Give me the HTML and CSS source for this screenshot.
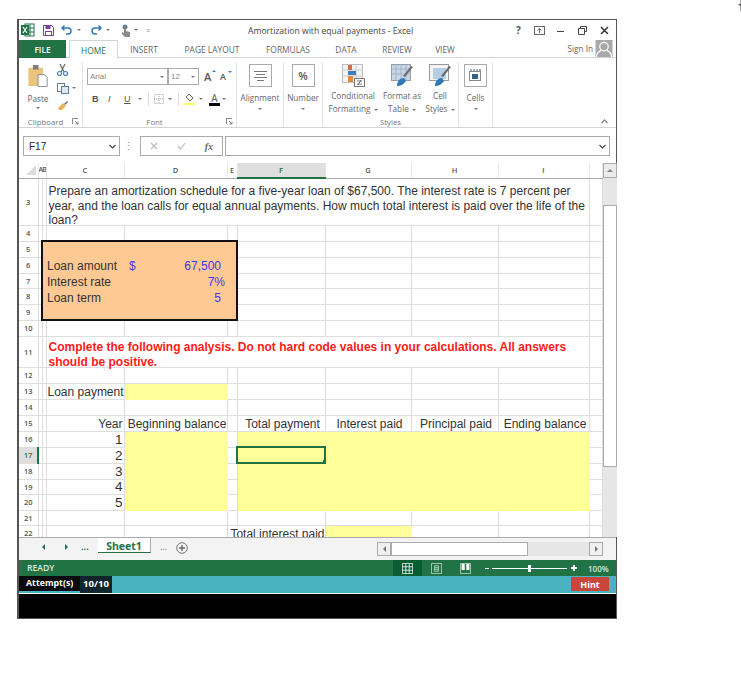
FILE: index.html
```html
<!DOCTYPE html>
<html lang="en">
<head>
<meta charset="utf-8">
<title>Amortization with equal payments - Excel</title>
<link rel="stylesheet" href="styles.css">
</head>
<body>
<div class="window">
  <header class="titlebar">
    <div class="qat">
      <svg class="qi-xl" width="14" height="14" viewBox="0 0 14 14"><rect x="4" y="1" width="9" height="12" fill="#fff" stroke="#217346"/><path d="M9 1v12M4 5h9M4 9h9" stroke="#217346"/><rect x="0" y="2" width="8" height="10" fill="#217346"/><path d="M2 4l4 6M6 4l-4 6" stroke="#fff" stroke-width="1.2"/></svg>
      <svg class="qi-save" width="11" height="11" viewBox="0 0 11 11"><path d="M.5.5h8l2 2v8H.5z" fill="none" stroke="#7a3f98"/><rect x="2.5" y="1" width="5" height="3" fill="#7a3f98"/><rect x="2.5" y="6.5" width="6" height="4" fill="none" stroke="#7a3f98"/></svg>
      <svg class="qi-undo" width="11" height="10" viewBox="0 0 11 10"><path d="M1 3h6a3 3 0 0 1 0 6H5M3.500 .5L1 3l2.500 2.500" fill="none" stroke="#2f78b8" stroke-width="1.400"/></svg>
      <span class="caret qi-c1"></span>
      <svg class="qi-redo" width="11" height="10" viewBox="0 0 11 10"><path d="M10 3H4a3 3 0 0 0 0 6h2M7.500 .5L10 3 7.500 5.500" fill="none" stroke="#2f78b8" stroke-width="1.400"/></svg>
      <span class="caret qi-c2"></span>
      <svg class="qi-touch" width="10" height="13" viewBox="0 0 10 13"><circle cx="4" cy="3" r="2.500" fill="#6d7f8c"/><path d="M3 4v5L1 8v2l3 3h5V8L5 7V4z" fill="#8a8a8a"/></svg>
      <span class="caret qi-c3"></span>
      <span class="custom">&#8801;</span>
    </div>
    <div class="doc-title">Amortization with equal payments - Excel</div>
    <div class="winctl">
      <span class="help">?</span>
      <svg width="11" height="9" viewBox="0 0 11 9"><rect x=".5" y=".5" width="10" height="8" fill="none" stroke="#666"/><path d="M5.500 7V3M3.500 4.500l2-2 2 2" fill="none" stroke="#666"/></svg>
      <svg width="8" height="9" viewBox="0 0 8 9"><path d="M0 5.500h7" stroke="#444"/></svg>
      <svg width="9" height="9" viewBox="0 0 9 9"><path d="M2.500 2V.5h6v5H7M.5 2.500h6v6h-6z" fill="none" stroke="#444"/></svg>
      <svg width="9" height="9" viewBox="0 0 9 9"><path d="M1 1l7 7M8 1L1 8" stroke="#333" stroke-width="1.500"/></svg>
    </div>
  </header>

  <nav class="tabs">
    <div class="tab file">FILE</div>
    <div class="tab home">HOME</div>
    <div class="tab">INSERT</div>
    <div class="tab">PAGE LAYOUT</div>
    <div class="tab">FORMULAS</div>
    <div class="tab">DATA</div>
    <div class="tab">REVIEW</div>
    <div class="tab">VIEW</div>
    <div class="signin"><span>Sign In</span>
      <svg width="18" height="18" viewBox="0 0 18 18"><rect width="18" height="18" fill="#a9a9a9"/><circle cx="9" cy="7" r="4.500" fill="none" stroke="#fff" stroke-width="1.200"/><path d="M1 18c0-5 3-6 5-7M17 18c0-5-3-6-5-7" fill="none" stroke="#fff" stroke-width="1.200"/></svg>
    </div>
  </nav>

  <section class="ribbon">
    <div class="group g-clip">
      <div class="group-body clip-body">
        <div class="paste">
          <svg width="22" height="22" viewBox="0 0 23 24"><rect x="1" y="3" width="16" height="20" fill="#eac57d"/><rect x="6" y="0" width="6" height="5" fill="#7d7d7d"/><path d="M11.500 10.500h7l3 3v10h-10z" fill="#fff" stroke="#888"/></svg>
          <span class="lbl">Paste</span>
          <span class="caret"></span>
        </div>
        <div class="clip-tools">
          <svg width="11" height="12" viewBox="0 0 11 12"><path d="M3 0l4 8M8 0L4 8" stroke="#666" stroke-width="1.200"/><circle cx="2.500" cy="9.500" r="2" fill="none" stroke="#3f7fb6" stroke-width="1.200"/><circle cx="8.500" cy="9.500" r="2" fill="none" stroke="#3f7fb6" stroke-width="1.200"/></svg>
          <div class="copy-row"><svg width="12" height="11" viewBox="0 0 12 11"><rect x=".5" y=".5" width="7" height="8" fill="#fff" stroke="#777"/><rect x="4.500" y="3.500" width="7" height="7" fill="#dfe9f3" stroke="#5b7f9f"/></svg><span class="caret"></span></div>
          <svg width="12" height="11" viewBox="0 0 12 11"><path d="M7 4l3-3 1 1-3 3z" fill="#666"/><path d="M1 8l5-5 3 3-4 4H2z" fill="#e5b75c"/></svg>
        </div>
      </div>
      <div class="group-label lab-clip">Clipboard<svg class="launcher" width="7" height="7" viewBox="0 0 7 7"><path d="M.5 6V.5H6M3 3l3 3M6 3.500V6H3.500" fill="none" stroke="#888"/></svg></div>
    </div>

    <div class="group g-font">
      <div class="group-body font-body">
        <div class="font-row1">
          <div class="fbox fname">Arial<span class="caret"></span></div>
          <div class="fbox fsize">12<span class="caret"></span></div>
          <span class="growA">A<i class="up"></i></span>
          <span class="growA small">A<i class="down"></i></span>
        </div>
        <div class="font-row2">
          <b class="fmt">B</b><i class="fmt it">I</i><u class="fmt un">U</u><span class="caret"></span>
          <span class="vsep"></span>
          <svg width="10" height="10" viewBox="0 0 10 10"><rect x=".5" y=".5" width="9" height="9" fill="none" stroke="#aaa" stroke-dasharray="1 1"/><path d="M5 0v10M0 5h10" stroke="#aaa" stroke-dasharray="1 1"/></svg><span class="caret"></span>
          <span class="vsep"></span>
          <svg width="11" height="12" viewBox="0 0 11 12"><path d="M5 1l4 4-3 3-4-4z" fill="#fff" stroke="#666"/><rect y="10" width="11" height="2" fill="#ffff66"/></svg><span class="caret"></span>
          <span class="font-color">A</span><span class="caret"></span>
        </div>
      </div>
      <div class="group-label lab-font">Font<svg class="launcher" width="7" height="7" viewBox="0 0 7 7"><path d="M.5 6V.5H6M3 3l3 3M6 3.500V6H3.500" fill="none" stroke="#888"/></svg></div>
    </div>

    <div class="group g-align">
      <div class="group-body single">
        <div class="bigbtn"><svg width="13" height="10" viewBox="0 0 13 10"><path d="M0 .5h13M2 3.500h9M0 6.500h13M3 9.500h7" stroke="#777"/></svg></div>
        <span class="lbl">Alignment</span><span class="caret"></span>
      </div>
      <div class="group-label"></div>
    </div>

    <div class="group g-num">
      <div class="group-body single">
        <div class="bigbtn pct">%</div>
        <span class="lbl">Number</span><span class="caret"></span>
      </div>
      <div class="group-label"></div>
    </div>

    <div class="group g-styles">
      <div class="group-body styles-body">
        <div class="style-item si-cond">
          <svg width="23" height="23" viewBox="0 0 23 23"><rect x=".5" y=".5" width="20" height="18" fill="#f4f4f4" stroke="#bbb"/><path d="M7 0v19M14 0v19M0 6h21M0 12h21" stroke="#ccc"/><rect x="6" y="1" width="4" height="5" fill="#d9694c"/><rect x="6" y="7" width="8" height="4" fill="#3f7fb6"/><rect x="6" y="12" width="5" height="6" fill="#e08a3c"/><rect x="12.500" y="14.500" width="10" height="8" fill="#fff" stroke="#777"/><path d="M15 17h5M15 20h5M19 16l-3 5" stroke="#555" stroke-width=".8"/></svg>
          <span class="lbl">Conditional</span><span class="lbl">Formatting <span class="caret inl"></span></span>
        </div>
        <div class="style-item si-table">
          <svg width="23" height="23" viewBox="0 0 23 23"><rect x=".5" y=".5" width="19" height="16" fill="#c7d6e6" stroke="#999"/><path d="M5 0v17M10 0v17M15 0v17M0 5h20M0 10h20" stroke="#9fb0c0" stroke-width=".8"/><path d="M22 3l-8 10-2-1 8-10z" fill="#6b6b6b"/><path d="M6 22c0-5 3-8 7-8l2 3c-2 3-5 5-9 5z" fill="#2f78b8"/></svg>
          <span class="lbl">Format as</span><span class="lbl">Table <span class="caret inl"></span></span>
        </div>
        <div class="style-item si-cell">
          <svg width="23" height="23" viewBox="0 0 23 23"><rect x=".5" y=".5" width="19" height="16" fill="#f3f3f3" stroke="#999"/><rect x="4" y="4" width="13" height="11" fill="#b7cde4"/><path d="M22 3l-8 10-2-1 8-10z" fill="#6b6b6b"/><path d="M6 22c0-5 3-8 7-8l2 3c-2 3-5 5-9 5z" fill="#2f78b8"/></svg>
          <span class="lbl">Cell</span><span class="lbl">Styles <span class="caret inl"></span></span>
        </div>
      </div>
      <div class="group-label">Styles</div>
    </div>

    <div class="group g-cells">
      <div class="group-body single">
        <div class="bigbtn"><svg width="13" height="13" viewBox="0 0 13 13"><rect x=".5" y="2.500" width="11" height="9" fill="#fff" stroke="#888"/><rect x="3" y="5" width="6" height="5" fill="#355f8c"/><path d="M2 0v2M5 0v2M8 0v2M11 0v2" stroke="#355f8c"/></svg></div>
        <span class="lbl">Cells</span><span class="caret"></span>
      </div>
      <div class="group-label"></div>
    </div>
    <svg class="collapse" width="7" height="5" viewBox="0 0 7 5"><path d="M.5 4l3-3 3 3" fill="none" stroke="#888" stroke-width="1.300"/></svg>
  </section>

  <section class="formula">
    <div class="namebox"><span>F17</span><svg width="7" height="5" viewBox="0 0 7 5"><path d="M.5 1l3 3 3-3" fill="none" stroke="#444" stroke-width="1.200"/></svg></div>
    <div class="dots">&#8942;</div>
    <div class="fxbox">
      <svg width="8" height="8" viewBox="0 0 8 8"><path d="M1 1l6 6M7 1L1 7" stroke="#bbb" stroke-width="1.200"/></svg>
      <svg width="9" height="8" viewBox="0 0 9 8"><path d="M1 4l2.500 3L8 1" fill="none" stroke="#bbb" stroke-width="1.200"/></svg>
      <em>fx</em>
    </div>
    <div class="finput"><svg width="7" height="5" viewBox="0 0 7 5"><path d="M.5 1l3 3 3-3" fill="none" stroke="#444" stroke-width="1.200"/></svg></div>
  </section>

  <section class="sheet-area">
    <div class="grid-view">
      <table class="grid">
        <colgroup><col class="c-rh"><col class="c-a"><col class="c-b"><col class="c-c"><col class="c-d"><col class="c-e"><col class="c-f"><col class="c-g"><col class="c-h"><col class="c-i"><col class="c-j"></colgroup>
        <tr class="r-head"><th class="corner"><svg width="10" height="10" viewBox="0 0 10 10"><path d="M10 0v10H0z" fill="#dcdcdc"/></svg></th><th colspan="2" class="ch ab">AB</th><th class="ch">C</th><th class="ch">D</th><th class="ch">E</th><th class="ch sel">F</th><th class="ch">G</th><th class="ch">H</th><th class="ch">I</th><th class="ch"></th></tr>
        <tr class="r47"><th>3</th><td></td><td></td><td colspan="7" class="wrap"><div class="prompt">Prepare an amortization schedule for a five-year loan of $67,500. The interest rate is 7 percent per year, and the loan calls for equal annual payments. How much total interest is paid over the life of the loan?</div></td><td></td></tr>
        <tr><th>4</th><td></td><td></td><td></td><td></td><td></td><td></td><td></td><td></td><td></td><td></td></tr>
        <tr><th>5</th><td></td>
          <td colspan="4" rowspan="5" class="loan">
            <div class="loan-grid">
              <span></span><span></span><span></span>
              <span>Loan amount</span><span class="inp">$</span><span class="inp num p1">67,500</span>
              <span>Interest rate</span><span></span><span class="inp num">7%</span>
              <span>Loan term</span><span></span><span class="inp num p1">5</span>
            </div>
          </td>
          <td></td><td></td><td></td><td></td><td></td></tr>
        <tr><th>6</th><td></td><td></td><td></td><td></td><td></td><td></td></tr>
        <tr class="r15"><th>7</th><td></td><td></td><td></td><td></td><td></td><td></td></tr>
        <tr><th>8</th><td></td><td></td><td></td><td></td><td></td><td></td></tr>
        <tr><th>9</th><td></td><td></td><td></td><td></td><td></td><td></td></tr>
        <tr><th>10</th><td></td><td></td><td></td><td></td><td></td><td></td><td></td><td></td><td></td><td></td></tr>
        <tr class="r31"><th>11</th><td></td><td></td><td colspan="7" class="wrap warn"><div class="warn-in">Complete the following analysis. Do not hard code values in your calculations. All answers should be positive.</div></td><td></td></tr>
        <tr><th>12</th><td></td><td></td><td></td><td></td><td></td><td></td><td></td><td></td><td></td><td></td></tr>
        <tr><th>13</th><td></td><td></td><td class="txt">Loan payment</td><td class="y"></td><td></td><td></td><td></td><td></td><td></td><td></td></tr>
        <tr><th>14</th><td></td><td></td><td></td><td></td><td></td><td></td><td></td><td></td><td></td><td></td></tr>
        <tr><th>15</th><td></td><td></td><td class="txt right">Year</td><td class="txt ctr">Beginning balance</td><td></td><td class="txt ctr">Total payment</td><td class="txt ctr">Interest paid</td><td class="txt ctr">Principal paid</td><td class="txt ctr">Ending balance</td><td></td></tr>
        <tr><th>16</th><td></td><td></td><td class="n">1</td><td class="y"></td><td></td><td class="y"></td><td class="y"></td><td class="y"></td><td class="y"></td><td></td></tr>
        <tr><th class="rsel">17</th><td></td><td></td><td class="n">2</td><td class="y"></td><td></td><td class="y active"></td><td class="y"></td><td class="y"></td><td class="y"></td><td></td></tr>
        <tr><th>18</th><td></td><td></td><td class="n">3</td><td class="y"></td><td></td><td class="y"></td><td class="y"></td><td class="y"></td><td class="y"></td><td></td></tr>
        <tr class="r15"><th>19</th><td></td><td></td><td class="n">4</td><td class="y"></td><td></td><td class="y"></td><td class="y"></td><td class="y"></td><td class="y"></td><td></td></tr>
        <tr><th>20</th><td></td><td></td><td class="n">5</td><td class="y"></td><td></td><td class="y"></td><td class="y"></td><td class="y"></td><td class="y"></td><td></td></tr>
        <tr class="r15"><th>21</th><td></td><td></td><td></td><td></td><td></td><td></td><td></td><td></td><td></td><td></td></tr>
        <tr><th>22</th><td></td><td></td><td></td><td></td><td colspan="2" class="txt right total">Total interest paid</td><td class="y"></td><td></td><td></td><td></td></tr>
      </table>
    </div>
    <div class="vscroll">
      <div class="sbtn"><span class="tri-up"></span></div>
      <div class="vtrack1"></div>
      <div class="vthumb"></div>
      <div class="vtrack2"></div>
      <div class="sbtn down"><span class="tri-down"></span></div>
    </div>
  </section>

  <section class="sheetbar">
    <div class="sheetnav">
      <span class="tri-left"></span><span class="tri-right"></span><span class="more">...</span>
    </div>
    <div class="sheettab">Sheet1</div>
    <span class="more gray">...</span>
    <svg class="addsheet" width="12" height="12" viewBox="0 0 12 12"><circle cx="6" cy="6" r="5.300" fill="none" stroke="#777"/><path d="M6 3v6M3 6h6" stroke="#666" stroke-width="1.400"/></svg>
    <div class="hscroll">
      <div class="hbtn"><span class="tri-left gray"></span></div>
      <div class="hthumb"></div>
      <div class="htrack"></div>
      <div class="hbtn"><span class="tri-right gray"></span></div>
    </div>
  </section>

  <footer class="status">
    <span class="ready">READY</span>
    <div class="views">
      <div class="view on"><svg width="14" height="14" viewBox="0 0 14 14"><path d="M.5.5h13v13H.5zM4.800.5v13M9.200.5v13M.5 4.800h13M.5 9.200h13" fill="none" stroke="#fff"/></svg></div>
      <div class="view"><svg width="14" height="14" viewBox="0 0 14 14"><path d="M.5.500h13v13H.5z" fill="none" stroke="#cfe0d6"/><path d="M4.500 3.500h5v7h-5zM5 6h4M5 8h4" fill="none" stroke="#cfe0d6"/></svg></div>
      <div class="view"><svg width="14" height="14" viewBox="0 0 14 14"><path d="M.5.500h13v13H.5z" fill="none" stroke="#cfe0d6"/><rect x="2" y="1" width="4" height="8" fill="#fff"/><rect x="8" y="1" width="4" height="8" fill="#fff"/></svg></div>
    </div>
    <div class="zoom">
      <span class="zminus"></span>
      <div class="zline"><span class="zthumb"></span></div>
      <span class="zplus"></span>
    </div>
    <span class="zpct">100%</span>
  </footer>

  <section class="attempts">
    <span class="att-label">Attempt(s)</span>
    <span class="att-val">10/10</span>
    <button class="hint" type="button">Hint</button>
  </section>
  <div class="blackbar"></div>
</div>
</body>
</html>
```

FILE: styles.css
```css
* { box-sizing: border-box; }
html, body { margin: 0; padding: 0; background: #fff; }
body { font-family: "Open Sans", "Liberation Sans", sans-serif; color: #555; }

.window {
  margin: 19px 0 0 17px;
  width: 600px;
  height: 600px;
  border: 1px solid #555;
  border-left-width: 2px;
  background: #fff;
  display: flex;
  flex-direction: column;
}

.caret {
  display: inline-block;
  width: 0; height: 0;
  border-left: 2px solid transparent;
  border-right: 2px solid transparent;
  border-top: 2px solid #777;
  flex: none;
}
.caret.inl { vertical-align: middle; margin-left: 1px; }

/* title bar */
.titlebar { height: 20px; flex: none; display: flex; align-items: center; position: relative; }
.qat { width: 227px; flex: none; display: flex; align-items: center; padding-left: 1px; }
.qi-xl { margin-left: 1px; }
.qi-save { margin-left: 8px; }
.qi-undo { margin-left: 7px; }
.qi-c1 { margin-left: 5px; }
.qi-redo { margin-left: 10px; }
.qi-c2 { margin-left: 4px; }
.qi-touch { margin-left: 11px; }
.qi-c3 { margin-left: 3px; }
.custom { margin-left: 8px; font-size: 7px; color: #999; }
.doc-title { font-size: 8.6px; color: #444; margin-left: 2px; padding-top: 1px; white-space: nowrap; }
.winctl { margin-left: auto; width: 100px; display: flex; align-items: center; justify-content: space-between; padding-right: 7px; }
.help { font-size: 10px; font-weight: 700; color: #555; }

/* tabs */
.tabs {
  height: 18px; flex: none;
  display: grid;
  grid-template-columns: 47px 3px 49px 52px 84px 68px 48px 54px 42px 1fr;
  border-bottom: 1px solid #d4d4d4;
  font-size: 8.4px;
  color: #666;
}
.tab { display: flex; align-items: center; justify-content: center; white-space: nowrap; padding-top: 1px; }
.tab.file { background: #217346; color: #fff; font-weight: 600; }
.tab.home { grid-column: 3; background: #fff; border: 1px solid #d4d4d4; border-bottom: 0; height: 18px; color: #217346; }
.signin { display: flex; justify-content: flex-end; align-items: flex-start; gap: 2px; padding-right: 3px; font-size: 8.2px; }
.signin span { padding-top: 3px; }
.signin svg { display: block; height: 17px; }

/* ribbon */
.ribbon { height: 70px; flex: none; display: flex; padding-top: 4px; position: relative; border-bottom: 1px solid #d4d4d4; font-size: 8.2px; color: #666; }
.group { display: flex; flex-direction: column; border-right: 1px solid #e2e2e2; height: 65px; }
.group-body { flex: 1; min-height: 0; }
.group-label { height: 11px; flex: none; text-align: center; font-size: 7.8px; line-height: 12px; color: #777; position: relative; }
.lab-clip { padding-right: 10px; }
.lab-font { padding-right: 10px; }
.launcher { position: absolute; right: 3px; top: 2px; }
.lbl { display: block; white-space: nowrap; line-height: 13px; }
.g-clip { width: 64px; }
.g-font { width: 154px; }
.g-align { width: 47px; }
.g-num { width: 39px; }
.g-styles { width: 136px; }
.g-cells { width: 34px; }

.clip-body { display: flex; padding-left: 8px; }
.paste { width: 22px; display: flex; flex-direction: column; align-items: center; }
.paste svg { margin-top: 3px; }
.paste .lbl { margin-top: 5px; }
.paste .caret { margin-top: 2px; }
.clip-tools { margin-left: 8px; display: flex; flex-direction: column; align-items: flex-start; gap: 6.5px; padding-top: 2px; }
.copy-row { display: flex; align-items: center; gap: 3px; }

.font-body { padding: 6px 0 0 4px; }
.font-row1 { display: flex; align-items: center; }
.fbox { height: 17px; border: 1px solid #ababab; display: flex; align-items: center; justify-content: space-between; padding: 0 3px 0 2px; font-family: "Liberation Sans", sans-serif; font-size: 8px; color: #888; }
.fname { width: 81px; }
.fsize { width: 31px; border-left-width: 1px; }
.growA, .font-color { font-size: 11px; color: #555; }
.growA { margin-left: 5px; width: 11px; position: relative; font-weight: 600; line-height: 12px; }
.growA.small { font-size: 9px; margin-left: 5px; }
.up, .down { position: absolute; top: 0; right: -1px; width: 0; height: 0; border: 2px solid transparent; }
.up { border-bottom-color: #3f7fb6; top: -3px; }
.down { border-top-color: #3f7fb6; }
.font-row2 { display: flex; align-items: center; margin-top: 6px; padding-left: 5px; height: 16px; }
.fmt { font-family: "Liberation Sans", sans-serif; font-size: 9px; width: 16px; color: #555; }
.fmt.un { width: 12px; text-decoration: underline; }
.font-row2 .caret { margin-left: 2px; }
.vsep { width: 1px; height: 14px; background: #ddd; margin: 0 5px 0 6px; }
.font-row2 svg + .caret { margin-left: 4px; }
.font-color { margin-left: 6px; border-bottom: 3px solid #000; line-height: 10px; height: 13px; width: 11px; text-align: center; font-size: 10px; }

.single { display: flex; flex-direction: column; align-items: center; }
.bigbtn { width: 23px; height: 23px; border: 1px solid #ababab; display: flex; align-items: center; justify-content: center; margin-top: 2px; margin-bottom: 4px; }
.bigbtn.pct { font-size: 11px; color: #555; font-weight: 600; }
.single .caret { margin-top: 4px; }

.styles-body { display: grid; grid-template-columns: 60px 38px 38px; padding-left: 0; }
.style-item { display: flex; flex-direction: column; align-items: center; text-align: center; }
.style-item svg { margin-top: 2px; margin-bottom: 2px; }
.style-item .lbl { line-height: 13px; }
.collapse { position: absolute; right: 8px; top: 61px; }

/* formula bar */
.formula { height: 35px; flex: none; display: flex; align-items: flex-start; padding: 8px 6px 0 4px; }
.namebox { width: 97px; height: 20px; border: 1px solid #ababab; display: flex; align-items: center; justify-content: space-between; padding: 0 3px 0 5px; font-family: "Liberation Sans", sans-serif; font-size: 10px; color: #222; }
.dots { width: 20px; padding-right: 4px; text-align: center; line-height: 20px; font-size: 11px; color: #999; }
.fxbox { width: 83px; height: 20px; border: 1px solid #ababab; display: flex; align-items: center; justify-content: space-between; padding: 0 9px; }
.fxbox em { font-family: "Liberation Serif", serif; font-weight: 700; font-size: 10px; color: #666; }
.finput { margin-left: 2px; flex: 1; height: 20px; border: 1px solid #ababab; display: flex; align-items: center; justify-content: flex-end; padding-right: 3px; }

/* grid */
.sheet-area { height: 374px; flex: none; display: flex; }
.grid-view { width: 584px; flex: none; height: 374px; overflow: hidden; }
.grid { table-layout: fixed; border-collapse: collapse; width: 583px; font-family: "Liberation Sans", sans-serif; font-size: 12px; color: #333; }
.c-rh { width: 19px; } .c-a { width: 4px; } .c-b { width: 4px; } .c-c { width: 78px; } .c-d { width: 103px; } .c-e { width: 10px; }
.c-f { width: 88px; } .c-g { width: 86px; } .c-h { width: 87px; } .c-i { width: 91px; } .c-j { width: 13px; }
.grid tr { height: 16px; }
.grid tr.r-head { height: 15px; }
.grid tr.r47 { height: 47px; }
.grid tr.r31 { height: 31px; }
.grid tr.r15 { height: 15px; }
.grid td { border: 1px solid #dedede; padding: 0; overflow: hidden; white-space: nowrap; line-height: 14px; vertical-align: bottom; }
.grid th {
  border: 1px solid #dedede; border-left: 0; padding: 0; background: #fff;
  font-family: "Open Sans", sans-serif; font-weight: 600; font-size: 7.5px; color: #555; text-align: center; line-height: 10px; overflow: hidden;
}
.grid tr.r-head th { border-top: 0; border-bottom: 1px solid #ababab; border-right-color: #e6e6e6; font-size: 7.500px; }
.corner { text-align: right !important; padding-right: 2px !important; }
.corner svg { display: block; margin-left: 7px; }
.ch.ab { font-size: 7px !important; letter-spacing: -1px; }
.ch.sel { background: #dfdfdf; color: #217346; border-bottom: 2px solid #217346 !important; }
.rsel { background: #dfdfdf !important; color: #217346 !important; border-right: 2px solid #217346 !important; }
.grid td.wrap { white-space: normal; padding-left: 2px; vertical-align: top; overflow: visible; }
.prompt { line-height: 14.5px; margin-top: 5px; margin-bottom: -3px; }
.grid td.warn { color: #ff1a1a; font-weight: 700; }
.warn-in { line-height: 15px; margin-top: 3px; margin-bottom: -3px; }
.grid td.txt { padding: 0 1px 0 1px; }
.grid td.ctr { text-align: center; padding-left: 3px; padding-right: 0; }
.right { text-align: right; }
.grid td.y { background: #ffff99; border-color: #ffff99; }
.grid td.n { text-align: right; font-size: 13.500px; padding: 0 1px 1px 0; line-height: 13px; color: #333; }
.grid td.total { overflow: visible; padding-right: 0; }
.grid td.active { outline: 2px solid #217346; outline-offset: -1px; position: relative; }
.grid td.active::after { content: ""; position: absolute; right: -2px; bottom: -1px; width: 4px; height: 4px; background: #217346; }
.grid td.loan { background: #ffc993; border: 2px solid #111; vertical-align: top; padding: 0; overflow: visible; }
.loan-grid { display: grid; grid-template-columns: 82px 50px 46px; grid-auto-rows: 16px; padding-left: 4px; line-height: 16px; }
.inp { color: #3a3ae8; }
.num { text-align: right; }
.p1 { padding-right: 4px; }

/* vertical scrollbar */
.vscroll { width: 14px; flex: none; margin-left: 0; display: flex; flex-direction: column; background: #e6e6e6; }
.sbtn { height: 15px; flex: none; border: 1px solid #ababab; background: #ebebeb; display: flex; align-items: center; justify-content: center; }
.sbtn.down { height: 11px; }
.vtrack1 { height: 27px; flex: none; }
.vthumb { height: 262px; flex: none; background: #fff; border: 1px solid #ababab; }
.vtrack2 { flex: 1; }
.tri-up, .tri-down, .tri-left, .tri-right { display: inline-block; width: 0; height: 0; border: 3px solid transparent; }
.tri-up { border-bottom-color: #888; border-top-width: 0; }
.tri-down { border-top-color: #666; border-bottom-width: 0; }
.tri-left { border-right-color: #217346; border-left-width: 0; }
.tri-right { border-left-color: #217346; border-right-width: 0; }
.tri-left.gray { border-right-color: #777; }
.tri-right.gray { border-left-color: #777; }

/* sheet tabs */
.sheetbar { height: 23px; flex: none; display: flex; align-items: flex-start; background: #f3f3f3; border-top: 1px solid #ababab; position: relative; }
.sheetnav { width: 79px; flex: none; display: flex; align-items: center; height: 18px; padding-left: 23px; gap: 20px; }
.more { font-size: 9px; font-weight: 700; color: #217346; line-height: 18px; }
.sheetnav .more { margin-left: -7px; }
.more.gray { color: #777; margin-left: 9px; font-weight: 400; }
.sheettab { width: 53px; height: 15px; flex: none; background: #fff; border-right: 1px solid #ababab; border-bottom: 1px solid #217346; color: #217346; font-weight: 700; font-size: 10.5px; line-height: 17px; text-align: center; }
.addsheet { margin-left: 9px; margin-top: 4px; flex: none; }
.hscroll { position: absolute; left: 358px; top: 4px; width: 226px; height: 14px; display: flex; background: #e6e6e6; }
.hbtn { width: 14px; flex: none; border: 1px solid #ababab; background: #f0f0f0; display: flex; align-items: center; justify-content: center; }
.hthumb { width: 137px; flex: none; background: #fff; border: 1px solid #ababab; }
.htrack { flex: 1; }

/* status */
.status { height: 16px; flex: none; background: #217346; color: #d7ece0; display: flex; align-items: center; font-size: 8.6px; font-weight: 600; position: relative; }
.ready { margin-left: 8px; width: 366px; flex: none; }
.views { display: flex; height: 16px; flex: none; }
.view { width: 29px; display: flex; align-items: center; justify-content: center; }
.view svg { width: 11px; height: 11px; }
.view.on { background: #0a5c33; }
.zoom { display: flex; align-items: center; margin-left: 5px; height: 16px; flex: none; }
.zminus { width: 4px; height: 1px; background: #fff; }
.zline { width: 75px; height: 1px; background: #fff; margin: 0 4px 0 3px; position: relative; }
.zthumb { position: absolute; left: 36px; top: -3px; width: 3px; height: 7px; background: #fff; }
.zplus { width: 6px; height: 6px; background: linear-gradient(#fff,#fff) center/6px 2px no-repeat, linear-gradient(#fff,#fff) center/2px 6px no-repeat; }
.zpct { margin-left: 11px; font-size: 8px; white-space: nowrap; }

/* attempts */
.attempts { height: 17px; flex: none; background: #4ab3c2; display: flex; align-items: stretch; position: relative; font-family: "Open Sans", sans-serif; font-weight: 700; font-size: 8.8px; color: #fff; }
.att-label { width: 61px; background: #0a0a0a; line-height: 15px; height: 15px; padding-left: 7px; white-space: nowrap; }
.att-val { width: 32px; background: #10262b; line-height: 15px; text-align: center; font-size: 9.6px; }
.hint { margin-left: auto; margin-right: 7px; margin-top: 1px; width: 38px; height: 14px; padding: 0; border: 0; border-radius: 1px; background: #c8463a; color: #fff; font: 700 9px "Open Sans", sans-serif; }
.blackbar { flex: 1; background: #000; border-top: 1px solid #fff; }
```
